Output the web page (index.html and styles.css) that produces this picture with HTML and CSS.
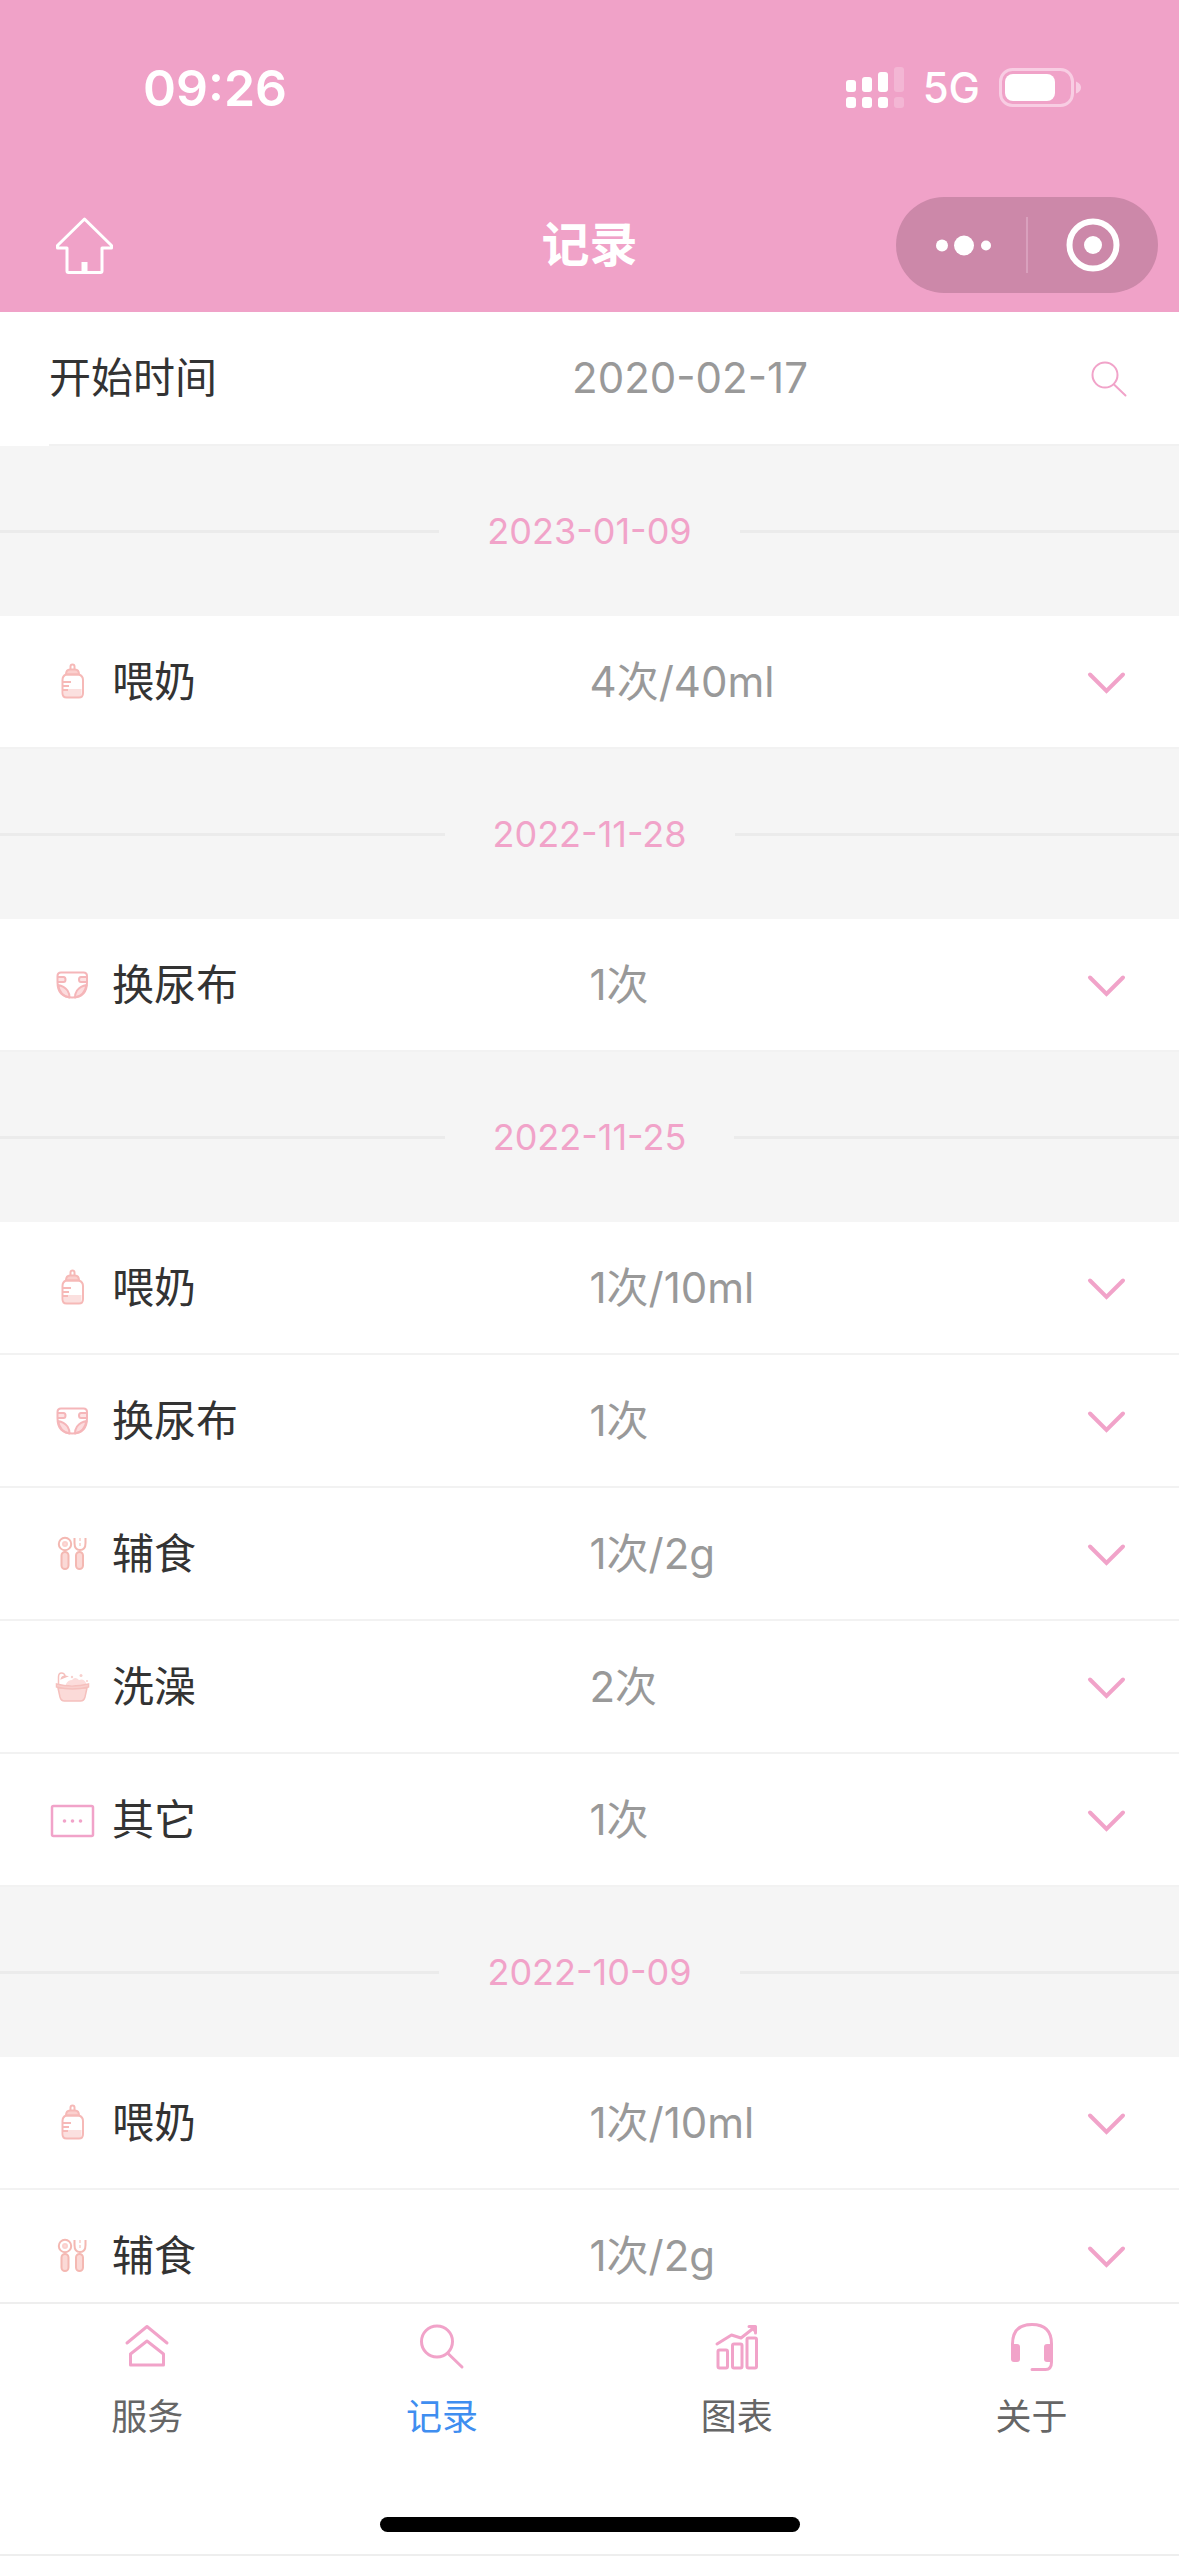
FILE: index.html
```html
<!DOCTYPE html>
<html lang="zh-CN">
<head>
<meta charset="utf-8">
<meta name="viewport" content="width=device-width, initial-scale=1">
<title>记录</title>
<link rel="stylesheet" href="styles.css">
</head>
<body>
<svg class="sprite" aria-hidden="true">
  <symbol id="chevron" viewBox="0 1 48 48"><path d="M7 17.500 23.500 34 40 17.500" fill="none" stroke="currentColor" stroke-width="4" stroke-linecap="round"/></symbol>
  <symbol id="bottle" viewBox="0 1 48 48">
    <path d="M15.500 32h18v5q0 3-3 3h-12q-3 0-3-3z" fill="#fbe0df"/>
    <g fill="none" stroke="#f6b9b7" stroke-width="2">
      <path d="M22.500 12V9.500q0-2 2-2t2 2V12"/>
      <path d="M18 17.500q0-5 4-5h5q4 0 4 5z" fill="#fbd0ce"/>
      <path d="M18 17.500h13q4 1.500 4 5.500v13q0 4.500-4 4.500H18.500q-4 0-4-4.500V23q0-4 3.500-5.500z"/>
      <path d="M15 25h8M15 29h6M15 33h5"/>
    </g>
  </symbol>
  <symbol id="diaper" viewBox="0 1 48 48">
    <g fill="none" stroke="#f5b6b9" stroke-width="2" stroke-linejoin="round">
      <path d="M10 25q6 1 9.500 5.500 2 3 2 7Q12 36 10 25zM38.500 25q-6 1-9.500 5.500-2 3-2 7Q36.500 36 38.500 25z" fill="#fcdcde"/>
      <path d="M9.500 17h6q2 0 2 2.500t-2 2.500h-6M39 17h-6q-2 0-2 2.500t2 2.500h6" fill="#fde3e4"/>
      <path d="M13 12.500h22.500q3.500 0 3.500 3.500v6q0 15.500-14.800 15.500T9.500 22v-6q0-3.500 3.500-3.500z"/>
    </g>
  </symbol>
  <symbol id="cutlery" viewBox="0 1 48 48">
    <g fill="none" stroke="#f4b8b2" stroke-width="2">
      <circle cx="17" cy="15" r="6.200"/><circle cx="17" cy="15" r="2" fill="#fbdcd9" stroke="#fbd0cd"/>
      <rect x="13.500" y="23" width="7" height="17" rx="3.500" fill="#fbd9d6"/>
      <rect x="28" y="23" width="7" height="17" rx="3.500" fill="#fbd9d6"/>
      <path d="M26.500 9v5q0 7 5.500 7t5.500-7V9"/><path d="M32 9v8" stroke="#fbd9d5" stroke-dasharray="3 2"/>
    </g>
  </symbol>
  <symbol id="bath" viewBox="0 1 48 48">
    <path d="M18 22q2-4 6-4 3-4 7 0 5-2 7 3v2H18z" fill="#fcdcdb"/>
    <g fill="none" stroke="#f5c0bd" stroke-width="1.500">
      <path d="M10.500 23v-8q0-4 3-4t3.500 3"/><path d="M13.500 16.500q1-3 5-2z" fill="#f8c9c6"/>
      <path d="M10 26l2 9q1 4 4.500 4h16q3.500 0 4.500-4l2-9z" fill="#fbdad8"/>
      <path d="M8.500 22q15 4 32 0v3q-16 4-32 0z" fill="#f9d0ce"/>
    </g>
    <g fill="#f8d0cd"><circle cx="24" cy="15" r="1.200"/><circle cx="33" cy="13.500" r="1.500"/><circle cx="39" cy="19" r="1"/></g>
  </symbol>
  <symbol id="other" viewBox="0 1 48 48">
    <rect x="4" y="11" width="41" height="30" rx="1.500" fill="none" stroke="#f1a3c9" stroke-width="2.500"/>
    <g fill="#f1a3c9"><circle cx="16.500" cy="26" r="1.800"/><circle cx="24.500" cy="26" r="1.800"/><circle cx="32.500" cy="26" r="1.800"/></g>
  </symbol>
</svg>

<div class="app">
  <header class="header">
    <div class="status">
      <span class="status-time">09:26</span>
      <div class="status-right">
        <svg width="58" height="42" viewBox="0 0 58 42" fill="#fff" aria-hidden="true">
          <rect y="13" width="10" height="12" rx="3"/><rect x="16" y="10" width="10" height="15" rx="3"/><rect x="32" y="5" width="10" height="20" rx="3"/><rect x="48" width="10" height="25" rx="3" opacity=".22"/>
          <rect y="30" width="10" height="11" rx="3"/><rect x="16" y="30" width="10" height="11" rx="3"/><rect x="32" y="30" width="10" height="11" rx="3"/><rect x="48" y="30" width="10" height="11" rx="3" opacity=".22"/>
        </svg>
        <span class="status-net">5G</span>
        <svg width="82" height="40" viewBox="0 0 82 40" aria-hidden="true">
          <rect x="1.500" y="1.500" width="72" height="36" rx="12" fill="none" stroke="#f8cde3" stroke-width="3"/>
          <rect x="6" y="6" width="50" height="27" rx="8" fill="#fff"/>
          <path d="M77 13.500q5 2 5 6t-5 6z" fill="#f8cde3"/>
        </svg>
      </div>
    </div>
    <div class="nav">
      <button class="home" aria-label="首页">
        <svg width="60" height="60" viewBox="0 0 60 60" aria-hidden="true">
          <path d="M30.500 4 57.500 30.500V33H48V56q0 1.500-1.500 1.500H14.500Q13 57.500 13 56V33H3.500V30.500z" fill="none" stroke="#fff" stroke-width="3" stroke-linejoin="round"/>
          <path d="M27.500 47h6v10h-6z" fill="#fff"/>
        </svg>
      </button>
      <h1 class="title">记录</h1>
      <div class="capsule">
        <button class="capsule-btn" aria-label="更多">
          <svg width="60" height="56" viewBox="0 0 60 56" fill="#fff" aria-hidden="true"><circle cx="11" cy="28.500" r="6"/><circle cx="33" cy="28.500" r="10"/><circle cx="55" cy="28.500" r="5"/></svg>
        </button>
        <span class="capsule-line"></span>
        <button class="capsule-btn" aria-label="关闭">
          <svg width="56" height="56" viewBox="0 0 56 56" aria-hidden="true"><circle cx="28" cy="28" r="23.500" fill="none" stroke="#fff" stroke-width="6"/><circle cx="28" cy="28" r="9" fill="#fff"/></svg>
        </button>
      </div>
    </div>
  </header>

  <main class="content">
    <form class="search">
      <div class="search-inner">
        <label class="search-label" for="start">开始时间</label>
        <input class="search-input" id="start" type="text" value="2020-02-17">
        <button class="search-btn" type="button" aria-label="搜索">
          <svg width="40" height="40" viewBox="0 0 40 40" fill="none" stroke="currentColor" stroke-width="2" stroke-linecap="round" aria-hidden="true"><circle cx="14" cy="17" r="12.500"/><path d="M23 26.500 34.500 37.500"/></svg>
        </button>
      </div>
    </form>

    <h2 class="date">2023-01-09</h2>
    <div class="group">
      <button class="row"><span class="name"><svg class="icon"><use href="#bottle"/></svg>喂奶</span><span class="value">4次/40ml<svg class="icon arrow"><use href="#chevron"/></svg></span></button>
    </div>

    <h2 class="date">2022-11-28</h2>
    <div class="group">
      <button class="row"><span class="name"><svg class="icon"><use href="#diaper"/></svg>换尿布</span><span class="value">1次<svg class="icon arrow"><use href="#chevron"/></svg></span></button>
    </div>

    <h2 class="date">2022-11-25</h2>
    <div class="group">
      <button class="row"><span class="name"><svg class="icon"><use href="#bottle"/></svg>喂奶</span><span class="value">1次/10ml<svg class="icon arrow"><use href="#chevron"/></svg></span></button>
      <button class="row"><span class="name"><svg class="icon"><use href="#diaper"/></svg>换尿布</span><span class="value">1次<svg class="icon arrow"><use href="#chevron"/></svg></span></button>
      <button class="row"><span class="name"><svg class="icon"><use href="#cutlery"/></svg>辅食</span><span class="value">1次/2g<svg class="icon arrow"><use href="#chevron"/></svg></span></button>
      <button class="row"><span class="name"><svg class="icon"><use href="#bath"/></svg>洗澡</span><span class="value">2次<svg class="icon arrow"><use href="#chevron"/></svg></span></button>
      <button class="row"><span class="name"><svg class="icon"><use href="#other"/></svg>其它</span><span class="value">1次<svg class="icon arrow"><use href="#chevron"/></svg></span></button>
    </div>

    <h2 class="date">2022-10-09</h2>
    <div class="group">
      <button class="row"><span class="name"><svg class="icon"><use href="#bottle"/></svg>喂奶</span><span class="value">1次/10ml<svg class="icon arrow"><use href="#chevron"/></svg></span></button>
      <button class="row"><span class="name"><svg class="icon"><use href="#cutlery"/></svg>辅食</span><span class="value">1次/2g<svg class="icon arrow"><use href="#chevron"/></svg></span></button>
    </div>
  </main>

  <footer class="footer">
    <nav class="tabs">
      <a class="tab" href="#service">
        <svg class="tab-icon" viewBox="0 0 48 48" aria-hidden="true"><path d="M4 20 24 3.500 44 20M7.500 42V31L24 18 40.500 31V42z"/></svg>
        服务
      </a>
      <a class="tab active" href="#record" aria-current="page">
        <svg class="tab-icon" viewBox="0 0 48 48" aria-hidden="true"><circle cx="19" cy="18.500" r="15.500"/><path d="M30 30.500 44 44"/></svg>
        记录
      </a>
      <a class="tab" href="#chart">
        <svg class="tab-icon" viewBox="0 0 48 48" aria-hidden="true"><rect x="5" y="27" width="9.500" height="18" rx="1.500"/><rect x="19.500" y="21" width="9.500" height="24" rx="1.500"/><rect x="34" y="15" width="9.500" height="30" rx="1.500"/><path d="M4 21 18.500 12 28 15 42 4"/><path d="M35 3h8v8z" fill="currentColor" stroke="none"/><path d="M36 3.500h6.500V10"/></svg>
        图表
      </a>
      <a class="tab" href="#about">
        <svg class="tab-icon" viewBox="0 0 48 48" aria-hidden="true"><path d="M4.500 28V21Q4.500 1.500 24 1.500T43.500 21V39q0 7.500-6 7.500H24"/><rect x="3" y="21" width="9" height="18" rx="3" fill="currentColor" stroke="none"/><path d="M45 21H39q-3 0-3 3v12q0 3 3 3h6z" fill="currentColor" stroke="none"/></svg>
        关于
      </a>
    </nav>
    <div class="indicator"></div>
  </footer>
</div>
</body>
</html>
```

FILE: styles.css
```css
* {
  box-sizing: border-box;
}

body {
  margin: 0;
  background: #f5f5f5;
  color: #333;
  font-family: Inter, "Noto Sans CJK SC", sans-serif;
  font-size: 42px;
  line-height: 60px;
}

button {
  padding: 0;
  border: 0;
  background: none;
  color: inherit;
  font: inherit;
}

svg {
  display: block;
  flex: none;
}

.sprite {
  position: absolute;
  width: 0;
  height: 0;
}

.app {
  display: flex;
  flex-direction: column;
  height: 100vh;
}

/* Header */
.header {
  flex: none;
  background: #f0a2c8;
  color: #fff;
}

.status {
  display: flex;
  align-items: center;
  justify-content: space-between;
  height: 176px;
  padding: 0 98px 0 143px;
}

.status-time {
  font-size: 50px;
  font-weight: 600;
}

.status-right {
  display: flex;
  align-items: center;
  gap: 19px;
}

.status-net {
  font-weight: 500;
}

.nav {
  display: grid;
  grid-template-columns: 1fr auto 1fr;
  align-items: center;
  height: 136px;
  padding: 2px 21px 0;
}

.home {
  justify-self: start;
  margin-left: 33px;
}

.title {
  margin: 0;
  font-size: 48px;
  font-weight: 700;
}

.capsule {
  display: flex;
  align-items: center;
  justify-self: end;
  width: 262px;
  height: 96px;
  border-radius: 48px;
  background: #cc88a9;
}

.capsule-btn {
  display: flex;
  flex: 1;
  justify-content: center;
}

.capsule-line {
  width: 2px;
  height: 56px;
  background: #d9a0bd;
}

/* Records */
.content {
  flex: 1;
  min-height: 0;
  overflow-y: auto;
  scrollbar-width: none;
}

.search {
  padding-left: 49px;
  background: #fff;
}

.search-inner {
  display: flex;
  align-items: center;
  height: 134px;
  padding-right: 48px;
  border-bottom: 2px solid #f1f1f1;
}

.search-label {
  flex: none;
  width: 240px;
}

.search-input {
  flex: 1;
  min-width: 0;
  padding: 0;
  border: 0;
  background: none;
  color: #999;
  font: inherit;
  text-align: center;
}

.search-btn,
.arrow {
  color: #f1a3c9;
}

.date {
  display: flex;
  align-items: center;
  gap: 48px;
  height: 170px;
  margin: 0;
  color: #f1a3c9;
  font-size: 36px;
  font-weight: 400;
}

.date::before,
.date::after {
  flex: 1;
  height: 3px;
  background: #ebebeb;
  content: "";
}

.group {
  background: #fff;
}

.row {
  display: grid;
  grid-template-columns: 1fr 1fr;
  align-items: center;
  width: 100%;
  height: 133px;
  padding: 0 48px;
  border-bottom: 2px solid #f2f2f2;
  text-align: left;
}

.name {
  display: flex;
  align-items: center;
  gap: 16px;
}

.value {
  display: flex;
  align-items: center;
  justify-content: space-between;
  color: #999;
}

.icon {
  width: 48px;
  height: 48px;
}

/* Tab bar */
.footer {
  flex: none;
  padding-bottom: 22px;
  border-top: 2px solid #eee;
  border-bottom: 2px solid #eee;
  background: #fff;
}

.tabs {
  display: grid;
  grid-template-columns: repeat(4, 1fr);
  padding-top: 19px;
}

.tab {
  display: flex;
  flex-direction: column;
  align-items: center;
  gap: 22px;
  color: #666;
  font-size: 36px;
  line-height: 48px;
  text-decoration: none;
}

.tab.active {
  color: #3f8ef0;
}

.tab-icon {
  width: 48px;
  height: 48px;
  color: #f1a3c9;
  fill: none;
  stroke: currentColor;
  stroke-width: 3;
  stroke-linecap: round;
  stroke-linejoin: round;
}

.indicator {
  width: 420px;
  height: 15px;
  margin: 76px auto 0;
  border-radius: 8px;
  background: #000;
}
```
